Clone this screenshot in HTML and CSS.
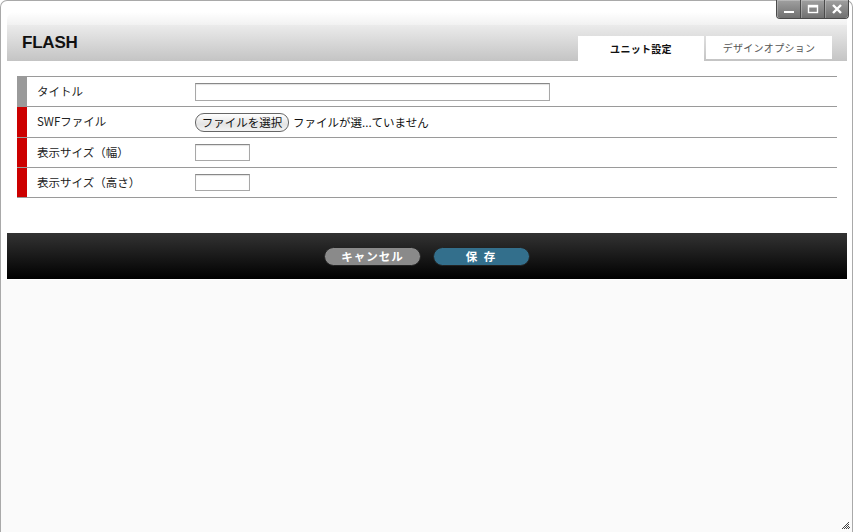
FILE: index.html
```html
<!DOCTYPE html>
<html lang="ja">
<head>
<meta charset="utf-8">
<link rel="stylesheet" href="styles.css">
</head>
<body>
<div class="window">
  <div class="controls">
    <div class="ctl"><svg width="12" height="10" viewBox="0 0 12 10"><rect x="1" y="7" width="10" height="2" fill="#fff"/></svg></div>
    <div class="ctl"><svg width="12" height="10" viewBox="0 0 12 10"><rect x="1.5" y="1.5" width="9" height="7" fill="none" stroke="#fff" stroke-width="1.4"/><rect x="1" y="1" width="10" height="2.5" fill="#fff"/></svg></div>
    <div class="ctl"><svg width="12" height="10" viewBox="0 0 12 10"><path d="M2 1 L10 9 M10 1 L2 9" stroke="#fff" stroke-width="2.4"/></svg></div>
  </div>
  <div class="panel">
    <div class="topstrip"></div>
    <div class="header">
      <div class="title">FLASH</div>
      <div class="tabs">
        <div class="tab active">ユニット設定</div>
        <div class="tab">デザインオプション</div>
      </div>
    </div>
    <div class="content">
      <div class="form">
        <div class="row">
          <div class="bar gray"></div>
          <div class="label">タイトル</div>
          <div class="field"><div class="input wide"></div></div>
        </div>
        <div class="row tall">
          <div class="bar red"></div>
          <div class="label">SWFファイル</div>
          <div class="field"><div class="filebtn">ファイルを選択</div><span class="filetext">ファイルが選...ていません</span></div>
        </div>
        <div class="row">
          <div class="bar red"></div>
          <div class="label">表示サイズ（幅）</div>
          <div class="field"><div class="input small"></div></div>
        </div>
        <div class="row">
          <div class="bar red"></div>
          <div class="label">表示サイズ（高さ）</div>
          <div class="field"><div class="input small"></div></div>
        </div>
      </div>
    </div>
    <div class="footer">
      <div class="btn cancel">キャンセル</div>
      <div class="btn save">保 存</div>
    </div>
  </div>
  <div class="grip"><svg width="8" height="8" viewBox="0 0 8 8"><g fill="#444"><rect x="6" y="0" width="1" height="1"/><rect x="4" y="2" width="1" height="1"/><rect x="6" y="2" width="1" height="1"/><rect x="2" y="4" width="1" height="1"/><rect x="4" y="4" width="1" height="1"/><rect x="6" y="4" width="1" height="1"/><rect x="0" y="6" width="1" height="1"/><rect x="2" y="6" width="1" height="1"/><rect x="4" y="6" width="1" height="1"/><rect x="6" y="6" width="1" height="1"/><rect x="5" y="1" width="1" height="1"/><rect x="3" y="3" width="1" height="1"/><rect x="5" y="3" width="1" height="1"/><rect x="1" y="5" width="1" height="1"/><rect x="3" y="5" width="1" height="1"/><rect x="5" y="5" width="1" height="1"/><rect x="7" y="5" width="1" height="1"/></g></svg></div>
</div>
</body>
</html>
```
FILE: styles.css
```css
html, body {
  margin: 0;
  padding: 0;
  background: #ffffff;
}
body {
  width: 854px;
  height: 532px;
  overflow: hidden;
  font-family: "Noto Sans CJK JP", "Liberation Sans", sans-serif;
  font-size: 12px;
  color: #222;
}
.window {
  position: relative;
  box-sizing: border-box;
  width: 853px;
  height: 532px;
  border: 1px solid #a9a9a9;
  border-bottom: none;
  border-radius: 7px 7px 0 0;
  background: linear-gradient(#ffffff 0, #ffffff 279px, #fafafa 279px);
  padding: 11px 5px 0 6px;
}
.controls {
  position: absolute;
  top: -1px;
  right: 3px;
  display: flex;
  border: 1px solid #4a4a4a;
  border-top: none;
  border-radius: 0 0 4px 4px;
  overflow: hidden;
}
.ctl {
  width: 23px;
  height: 18px;
  display: flex;
  align-items: center;
  justify-content: center;
  background: linear-gradient(#a0a0a0, #707070);
  border-left: 1px solid #4a4a4a;
  box-shadow: inset 1px 1px 0 rgba(255,255,255,0.25);
}
.ctl:first-child { border-left: none; }
.panel {
  display: flex;
  flex-direction: column;
}
.topstrip {
  height: 13px;
  border-radius: 8px 0 0 0;
  background: linear-gradient(#ffffff, #f1f1f1);
}
.header {
  height: 36px;
  display: flex;
  justify-content: space-between;
  align-items: flex-end;
  background: linear-gradient(#ebebeb, #c4c4c4);
}
.title {
  align-self: center;
  padding-left: 15px;
  font-family: "Liberation Sans", Arial, sans-serif;
  font-weight: bold;
  font-size: 17px;
  color: #111;
  letter-spacing: -0.2px;
}
.tabs {
  display: flex;
  align-items: flex-start;
  gap: 2px;
  padding-right: 15px;
  height: 25px;
}
.tab {
  width: 126px;
  height: 23px;
  display: flex;
  align-items: center;
  justify-content: center;
  background: #ffffff;
  font-size: 10px;
  color: #555;
  letter-spacing: 0.3px;
}
.tab.active {
  height: 25px;
  font-weight: bold;
  color: #111;
  font-size: 10px;
}
.content {
  background: #ffffff;
  padding: 15px 10px 35px 10px;
}
.form {
  border-top: 1px solid #9a9a9a;
}
.row {
  display: flex;
  height: 29px;
  border-bottom: 1px solid #9a9a9a;
}
.row.tall { height: 30px; }
.bar {
  width: 10px;
  flex: none;
}
.bar.gray { background: #9a9a9a; }
.bar.red { background: #cc0000; }
.label {
  box-sizing: border-box;
  width: 168px;
  flex: none;
  padding-left: 10px;
  display: flex;
  align-items: center;
  font-size: 11.5px;
  color: #222;
  padding-bottom: 2px;
}
.field {
  display: flex;
  align-items: center;
  flex: 1;
}
.input {
  box-sizing: border-box;
  height: 18px;
  border: 1px solid #a8a8a8;
  border-top-color: #888;
  background: #fff;
  box-shadow: inset 0 1px 1px rgba(0,0,0,0.12);
}
.input.wide { width: 355px; }
.input.small { width: 55px; height: 17px; }
.filebtn {
  box-sizing: border-box;
  height: 19px;
  width: 94px;
  border: 1px solid #666;
  border-radius: 9px;
  background: linear-gradient(#ffffff, #e4e4e4 60%, #f4f4f4);
  display: flex;
  align-items: center;
  justify-content: center;
  font-size: 11.5px;
  color: #111;
}
.filetext {
  margin-left: 4px;
  font-size: 11.5px;
  color: #111;
}
.footer {
  height: 46px;
  display: flex;
  align-items: center;
  justify-content: center;
  gap: 12px;
  background: linear-gradient(#333333, #000000);
}
.btn {
  box-sizing: border-box;
  width: 97px;
  height: 19px;
  border-radius: 10px;
  display: flex;
  align-items: center;
  justify-content: center;
  font-weight: bold;
  font-size: 11.5px;
  color: #fff;
  letter-spacing: 1px;
  border: 1px solid #222;
}
.btn.cancel { background: #8a8a8a; }
.btn.save { background: #336f8c; letter-spacing: 2px; }
.grip {
  position: absolute;
  right: 2px;
  bottom: 2px;
  width: 8px;
  height: 8px;
  line-height: 0;
}
```
